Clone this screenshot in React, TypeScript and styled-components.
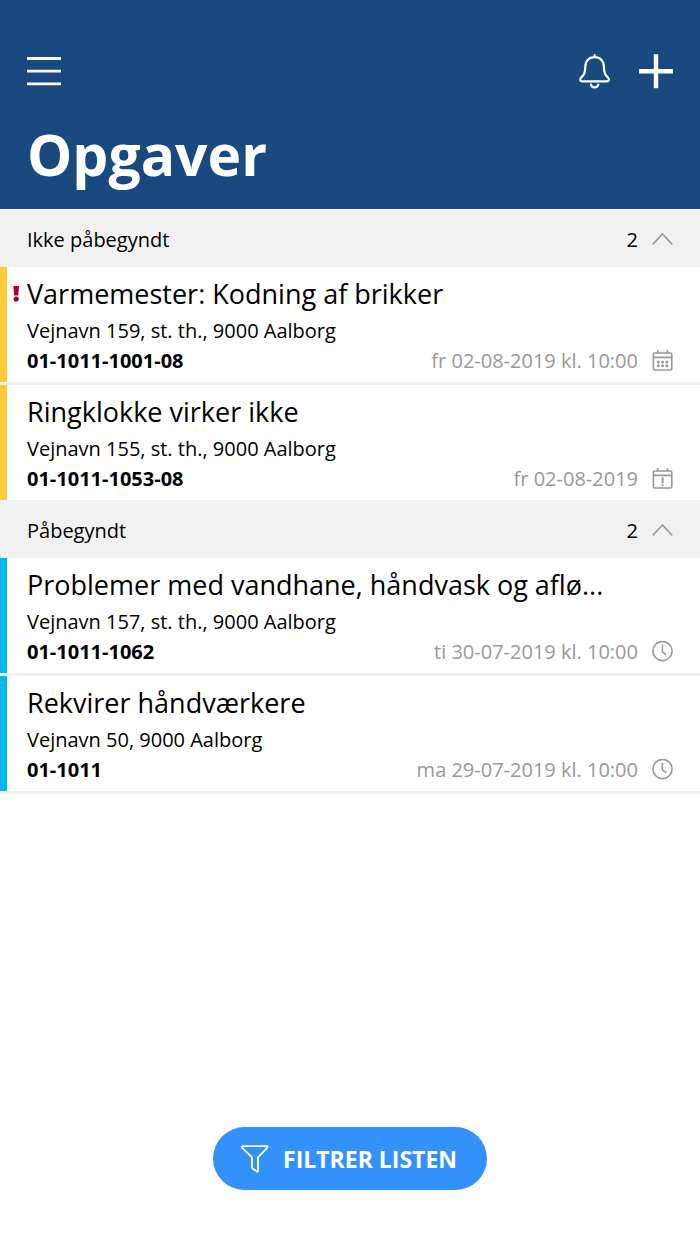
import React, { useState } from 'react';
import styled, { createGlobalStyle } from 'styled-components';

const GlobalStyle = createGlobalStyle`
  *, *::before, *::after { box-sizing: border-box; }
  body {
    margin: 0;
    background: #fff;
    color: #000;
    font-family: 'Open Sans', 'Noto Sans', sans-serif;
    font-size: 20px;
    line-height: 30px;
  }
`;

const Page = styled.div`
  display: flex;
  flex-direction: column;
  min-height: 100vh;
`;

const Header = styled.header`
  display: flex;
  flex-direction: column;
  gap: 22px;
  padding: 54px 27px 13px;
  background: #1a4980;
  color: #fff;
`;

const Toolbar = styled.div`
  display: flex;
  align-items: center;
  justify-content: space-between;
`;

const Actions = styled.div`
  display: flex;
  gap: 28px;
`;

const IconButton = styled.button`
  display: flex;
  padding: 0;
  border: 0;
  background: none;
  color: inherit;
  cursor: pointer;
`;

const PageTitle = styled.h1`
  margin: 0;
  font-size: 57px;
  font-weight: 700;
  line-height: 84px;
`;

const SectionToggle = styled.button`
  display: flex;
  align-items: center;
  gap: 14px;
  width: 100%;
  height: 58px;
  padding: 4px 27px 0;
  border: 0;
  background: #f1f1f1;
  color: inherit;
  font: inherit;
  text-align: left;
  cursor: pointer;
`;

const SectionName = styled.span`
  flex: 1;
`;

const Chevron = styled.svg<{ $open: boolean }>`
  transform: ${(p) => (p.$open ? 'none' : 'rotate(180deg)')};
`;

const TaskList = styled.ul`
  display: flex;
  flex-direction: column;
  gap: 3px;
  margin: 0;
  padding: 0;
  background: #f1f1f1;
  list-style: none;
`;

const Task = styled.li<{ $color: string }>`
  display: grid;
  grid-template-columns: 20px minmax(0, 1fr);
  padding: 8px 27px 6px 0;
  border-left: 7px solid ${(p) => p.$color};
  background: #fff;
`;

const Priority = styled.span`
  display: flex;
  align-items: center;
  justify-content: center;
  height: 38px;
  color: #a8002d;
`;

const TaskBody = styled.div`
  grid-column: 2;
`;

const TaskTitle = styled.h2`
  margin: 0 68px 3px 0;
  overflow: hidden;
  font-size: 27px;
  font-weight: 400;
  line-height: 38px;
  text-overflow: ellipsis;
  white-space: nowrap;
`;

const Address = styled.p`
  margin: 0;
`;

const TaskFooter = styled.div`
  display: flex;
  align-items: center;
  justify-content: space-between;
`;

const TaskNumber = styled.strong`
  font-weight: 700;
`;

const Due = styled.span`
  display: flex;
  align-items: center;
  gap: 14px;
  color: #999;
`;

const ListEnd = styled.div`
  height: 3px;
  background: #f1f1f1;
`;

const FilterBar = styled.footer`
  display: flex;
  justify-content: center;
  margin-top: auto;
  padding: 54px 27px;
`;

const FilterButton = styled.button`
  display: flex;
  align-items: center;
  gap: 14px;
  height: 63px;
  padding: 0 30px 0 28px;
  border: 0;
  border-radius: 32px;
  background: #3391fb;
  color: #fff;
  font: inherit;
  font-size: 23px;
  font-weight: 700;
  cursor: pointer;
`;

const line = { fill: 'none', stroke: 'currentColor', strokeLinecap: 'round', strokeLinejoin: 'round' } as const;

const MenuIcon = () => (
  <svg width="34" height="36" viewBox="0 0 34 36" {...line} strokeWidth="2.8" strokeLinecap="butt">
    <path d="M0 4.5h34M0 17.2h34M0 29.9h34" />
  </svg>
);

const BellIcon = () => (
  <svg width="32" height="36" viewBox="0 0 32 36" {...line} strokeWidth="2.2">
    <path d="M15.6 1.2v2M15.6 3.2C9.6 3.2 6.3 7.6 6.3 12.5C6.3 19.5 4.6 21 2.2 23.6C.2 26 1.6 27.3 3.2 27.3H28C29.6 27.3 31 26 29 23.6C26.6 21 24.9 19.5 24.9 12.5C24.9 7.6 21.6 3.2 15.6 3.2Z" />
    <path d="M12 30.6C12.4 34.2 18.8 34.2 19.2 30.6" />
  </svg>
);

const PlusIcon = () => (
  <svg width="34" height="36" viewBox="0 0 34 36" {...line} strokeWidth="4.4" strokeLinecap="butt">
    <path d="M0 17.2h34M17 .2v34" />
  </svg>
);

const PriorityIcon = () => (
  <svg width="8" height="16" viewBox="0 0 8 16" fill="currentColor" role="img" aria-label="Høj prioritet">
    <path d="M.4 0H6L5.2 9.4H1.2Z" />
    <circle cx="3.2" cy="13" r="2.6" />
  </svg>
);

const ChevronIcon = ({ open }: { open: boolean }) => (
  <Chevron $open={open} width="21" height="14" viewBox="0 0 21 14" fill="none" stroke="#999" strokeWidth="1.6" aria-hidden="true">
    <path d="M.8 11.4L10.5 1L20.2 11.4" />
  </Chevron>
);

type DueKind = 'calendar' | 'deadline' | 'clock';

const DueIcon = ({ kind }: { kind: DueKind }) => (
  <svg width="21" height="22" viewBox="0 0 21 22" {...line} strokeWidth="1.6" aria-hidden="true">
    {kind === 'clock' ? (
      <>
        <circle cx="10.5" cy="10" r="9.6" />
        <path d="M10.4 4.3v6.6l3.4 2.5" />
      </>
    ) : (
      <>
        <rect x="1.4" y="3" width="18.4" height="17" rx="1.4" />
        <path d="M1.4 7.4h18.4M5.7.8v2.2M15.5.8v2.2" />
      </>
    )}
    {kind === 'calendar' && (
      <path d="M6.3 12h.01M10.6 12h.01M14.9 12h.01M6.3 15.8h.01M10.6 15.8h.01M14.9 15.8h.01" strokeWidth="3" />
    )}
    {kind === 'deadline' && (
      <>
        <path d="M10.6 10v4.4" strokeWidth="2" />
        <path d="M10.6 17.3h.01" strokeWidth="2.2" />
      </>
    )}
  </svg>
);

const FunnelIcon = () => (
  <svg width="28" height="28" viewBox="0 0 28 28" {...line} strokeWidth="1.8">
    <path d="M1.5 1.2H25.8Q27 1.6 26.2 2.8L17 12.4V26.2Q16.8 27 16 26.6L11.6 23.4Q11 23 11 22.2V12.4L1.2 2.8Q.4 1.6 1.5 1.2Z" />
  </svg>
);

interface TaskData {
  title: string;
  address: string;
  number: string;
  due: string;
  kind: DueKind;
  urgent?: boolean;
}

const sections: { name: string; color: string; tasks: TaskData[] }[] = [
  {
    name: 'Ikke påbegyndt',
    color: '#ffca38',
    tasks: [
      { title: 'Varmemester: Kodning af brikker', address: 'Vejnavn 159, st. th., 9000 Aalborg', number: '01-1011-1001-08', due: 'fr 02-08-2019 kl. 10:00', kind: 'calendar', urgent: true },
      { title: 'Ringklokke virker ikke', address: 'Vejnavn 155, st. th., 9000 Aalborg', number: '01-1011-1053-08', due: 'fr 02-08-2019', kind: 'deadline' },
    ],
  },
  {
    name: 'Påbegyndt',
    color: '#00bbea',
    tasks: [
      { title: 'Problemer med vandhane, håndvask og aflø...', address: 'Vejnavn 157, st. th., 9000 Aalborg', number: '01-1011-1062', due: 'ti 30-07-2019 kl. 10:00', kind: 'clock' },
      { title: 'Rekvirer håndværkere', address: 'Vejnavn 50, 9000 Aalborg', number: '01-1011', due: 'ma 29-07-2019 kl. 10:00', kind: 'clock' },
    ],
  },
];

export default function App() {
  const [closed, setClosed] = useState<string[]>([]);
  const toggle = (name: string) =>
    setClosed((c) => (c.includes(name) ? c.filter((n) => n !== name) : [...c, name]));

  return (
    <Page>
      <GlobalStyle />
      <Header>
        <Toolbar>
          <IconButton aria-label="Menu"><MenuIcon /></IconButton>
          <Actions>
            <IconButton aria-label="Notifikationer"><BellIcon /></IconButton>
            <IconButton aria-label="Ny opgave"><PlusIcon /></IconButton>
          </Actions>
        </Toolbar>
        <PageTitle>Opgaver</PageTitle>
      </Header>
      <main>
        {sections.map((s) => {
          const open = !closed.includes(s.name);
          return (
            <section key={s.name}>
              <SectionToggle aria-expanded={open} onClick={() => toggle(s.name)}>
                <SectionName>{s.name}</SectionName>
                <span>{s.tasks.length}</span>
                <ChevronIcon open={open} />
              </SectionToggle>
              {open && (
                <TaskList>
                  {s.tasks.map((t) => (
                    <Task key={t.number} $color={s.color}>
                      {t.urgent && <Priority><PriorityIcon /></Priority>}
                      <TaskBody>
                        <TaskTitle>{t.title}</TaskTitle>
                        <Address>{t.address}</Address>
                        <TaskFooter>
                          <TaskNumber>{t.number}</TaskNumber>
                          <Due>
                            {t.due}
                            <DueIcon kind={t.kind} />
                          </Due>
                        </TaskFooter>
                      </TaskBody>
                    </Task>
                  ))}
                </TaskList>
              )}
            </section>
          );
        })}
        <ListEnd />
      </main>
      <FilterBar>
        <FilterButton>
          <FunnelIcon />
          FILTRER LISTEN
        </FilterButton>
      </FilterBar>
    </Page>
  );
}
